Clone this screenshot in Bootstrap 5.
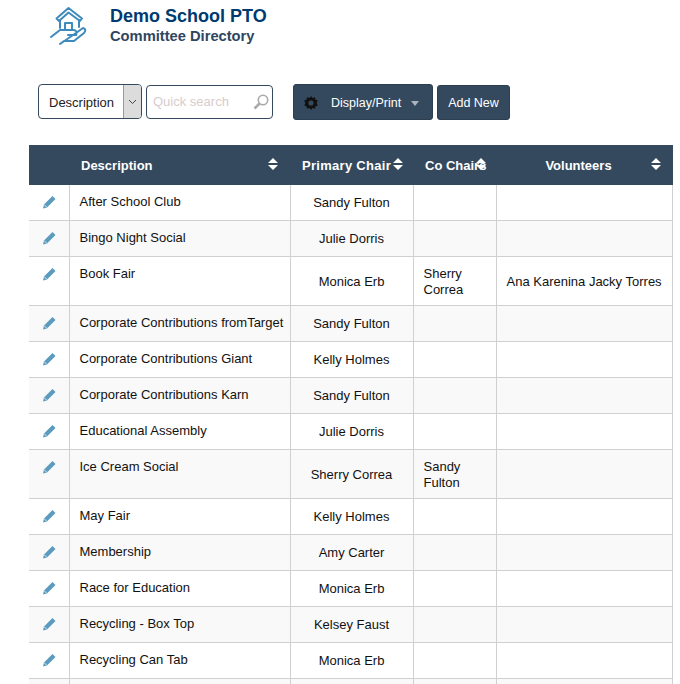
<!DOCTYPE html>
<html lang="en">
<head>
    <meta charset="UTF-8">
    <meta name="viewport" content="width=device-width, initial-scale=1.0">
    <title>Committee Directory</title>
    <link rel="stylesheet" href="https://cdn.jsdelivr.net/npm/bootstrap@5.3.0/dist/css/bootstrap.min.css">
    <style>
        html, body { height: 684px; overflow: hidden; }
        body { font-family: "Liberation Sans", Arial, sans-serif; font-size: 13px; color: #111; }
        .page-wrap { padding: 0 7px 0 29px; }
        .head-row { height: 84px; padding-left: 21px; }
        .logo-box { width: 38px; margin-right: 22px; margin-top: 6px; }
        .school-name { font-size: 18px; font-weight: 700; color: #003a70; line-height: 20px; margin: 6px 0 0; }
        .dir-name { font-size: 14.7px; font-weight: 700; color: #2f4560; line-height: 20px; }
        .tool-row { height: 61px; padding-left: 9px; padding-bottom: 25px; }
        .search-select { width: 104px; height: 35px; border: 1px solid #34495e; border-radius: 4px; overflow: hidden; }
        .search-select span { flex: 1; padding-left: 10px; line-height: 35px; color: #222; }
        .select-arrow { width: 18px; background: #dcdcdc; border-left: 1px solid #999; }
        .search-box { width: 127px; height: 34px; border: 1px solid #34495e; border-radius: 4px; margin: 1px 0 0 4px; padding: 0 3px 0 6px; color: #d8cccc; }
        .dark-btn { height: 36px; background: #34495e; color: #fff; border-radius: 3px; border: 1px solid #2c3e50; font-size: 12.5px; padding: 2px 0 0; }
        .print-btn { width: 140px; margin-left: 20px; margin-right: 4px; padding-left: 9px; }
        .add-btn { width: 73px; margin-top: 1px; height: 35px; }
        .caret-down { width: 0; height: 0; border: 4.5px solid transparent; border-top: 5px solid #aab4bf; border-bottom: 0; margin-left: 10px; }
        .dir-table { table-layout: fixed; width: 644px; margin: 0; border-color: #d0d0d0; }
        .dir-table thead th { background: #34495e; color: #fff; height: 40px; border: 0; padding: 1px 0 0; font-size: 13px; text-align: center; vertical-align: middle; position: relative; }
        .dir-table thead th.desc-head { text-align: left; padding-left: 12px; }
        .dir-table thead th.prim-head { padding-right: 10px; letter-spacing: .3px; }
        .dir-table thead th.vol-head { padding-right: 12px; }
        .dir-table td { height: 36px; padding: 9px 10px 7px; line-height: 16px; border: 1px solid #d0d0d0; color: #111; background: #fff; }
        .dir-table tbody tr:nth-child(even) td { background: #f9f9f9; }
        .dir-table tbody tr:first-child td { height: 35px; border-top: 0; }
        .dir-table td:last-child { border-right: 0; box-shadow: inset -1px 0 0 #d0d0d0; }
        .dir-table td.edit-cell { border-left: 0; padding: 9px 0 0 13px; }
        .dir-table td.desc-cell { padding-right: 0; white-space: nowrap; }
        .dir-table td.chair-cell { text-align: center; vertical-align: middle; }
        .dir-table td.vol-cell { vertical-align: middle; white-space: nowrap; }
        .dir-table tr.cut-row td { height: 6px; padding: 0; line-height: 0; border-bottom: 0; }
        .sort-mark { position: absolute; top: 13px; width: 10px; }
        .sort-mark svg { display: block; }
    </style>
</head>
<body>
<div class="page-wrap">

    <!-- Header -->
    <div class="head-row d-flex align-items-start">
        <div class="logo-box">
            <svg width="38" height="40" viewBox="0 0 38 40" fill="none" stroke="#3f8abd" stroke-width="2" stroke-linejoin="round" stroke-linecap="round">
                <path d="M6.5 12.5 L18.5 2 L32 12.5 L30 15 L18.5 6.5 L9 15 Z"/>
                <path d="M10 14 V22 M29 14 V21"/>
                <path d="M15 23 V17 H22 V23"/>
                <path d="M1 31 L10 24 H24 Q28 25 26 29 H18 M26 27 L33 22 Q37 23 34 27 L24 35 H14 L10 38 Z"/>
            </svg>
        </div>
        <div>
            <div class="school-name">Demo School PTO</div>
            <div class="dir-name">Committee Directory</div>
        </div>
    </div>

    <!-- Toolbar -->
    <div class="tool-row d-flex align-items-start">
        <div class="search-select d-flex">
            <span>Description</span>
            <div class="select-arrow d-flex align-items-center justify-content-center">
                <svg width="9" height="6" viewBox="0 0 9 6" fill="none" stroke="#444"><path d="M1 1 L4.5 4.5 L8 1"/></svg>
            </div>
        </div>
        <div class="search-box d-flex align-items-center justify-content-between">
            <span>Quick search</span>
            <svg width="16" height="17" viewBox="0 0 16 17" fill="none" stroke="#aaa" stroke-width="1.6"><circle cx="10" cy="6" r="4.7"/><path d="M6.5 9.5 L1.5 14.5" stroke-width="2.6"/></svg>
        </div>
        <button class="dark-btn print-btn d-flex align-items-center" type="button">
            <svg class="me-2" width="16" height="16" viewBox="0 0 16 16" fill="#111"><path d="M8 1 L9.5 3 L12 2.2 L12.4 4.6 L14.8 5.4 L13.6 8 L14.8 10.6 L12.4 11.4 L12 13.8 L9.5 13 L8 15 L6.5 13 L4 13.8 L3.6 11.4 L1.2 10.6 L2.4 8 L1.2 5.4 L3.6 4.6 L4 2.2 L6.5 3 Z"/><circle cx="8" cy="8" r="2.6" fill="#34495e"/></svg>
            <span class="ms-1">Display/Print</span>
            <span class="caret-down"></span>
        </button>
        <button class="dark-btn add-btn" type="button">Add New</button>
    </div>

    <!-- Committee table -->
    <table class="table dir-table">
        <colgroup>
            <col style="width:40px"><col style="width:221px"><col style="width:123px"><col style="width:83px"><col style="width:177px">
        </colgroup>
        <thead>
            <tr>
                <th></th>
                <th class="desc-head">Description<span class="sort-mark" style="left:199px"><svg width="10" height="12" viewBox="0 0 10 12" fill="#fff"><path d="M5 0 L10 5 H0 Z M0 7 H10 L5 12 Z"/></svg></span></th>
                <th class="prim-head">Primary Chair<span class="sort-mark" style="left:103px"><svg width="10" height="12" viewBox="0 0 10 12" fill="#fff"><path d="M5 0 L10 5 H0 Z M0 7 H10 L5 12 Z"/></svg></span></th>
                <th class="desc-head">Co Chairs<span class="sort-mark" style="left:63px"><svg width="10" height="12" viewBox="0 0 10 12" fill="#fff"><path d="M5 0 L10 5 H0 Z M0 7 H10 L5 12 Z"/></svg></span></th>
                <th class="vol-head">Volunteers<span class="sort-mark" style="left:155px"><svg width="10" height="12" viewBox="0 0 10 12" fill="#fff"><path d="M5 0 L10 5 H0 Z M0 7 H10 L5 12 Z"/></svg></span></th>
            </tr>
        </thead>
        <tbody id="rows"></tbody>
    </table>
</div>

<script>
    const committees = [
        ["After School Club", "Sandy Fulton", "", ""],
        ["Bingo Night Social", "Julie Dorris", "", ""],
        ["Book Fair", "Monica Erb", "Sherry Correa", "Ana Karenina Jacky Torres"],
        ["Corporate Contributions fromTarget", "Sandy Fulton", "", ""],
        ["Corporate Contributions Giant", "Kelly Holmes", "", ""],
        ["Corporate Contributions Karn", "Sandy Fulton", "", ""],
        ["Educational Assembly", "Julie Dorris", "", ""],
        ["Ice Cream Social", "Sherry Correa", "Sandy Fulton", ""],
        ["May Fair", "Kelly Holmes", "", ""],
        ["Membership", "Amy Carter", "", ""],
        ["Race for Education", "Monica Erb", "", ""],
        ["Recycling - Box Top", "Kelsey Faust", "", ""],
        ["Recycling Can Tab", "Monica Erb", "", ""]
    ];
    const pencil = `<svg width="15" height="15" viewBox="0 0 15 15"><path d="M10.5 1 L13.5 4 L5 12.5 L1 13.5 L2 9.5 Z" fill="#5b9bbd"/><path d="M2 9.5 L5 12.5" stroke="#d6e6ef" stroke-width="1"/></svg>`;
    // last row is cut off by the bottom of the window, only its borders show
    document.getElementById("rows").innerHTML = committees.map(c => `<tr>
        <td class="edit-cell">${pencil}</td>
        <td class="desc-cell">${c[0]}</td>
        <td class="chair-cell">${c[1]}</td>
        <td>${c[2]}</td>
        <td class="vol-cell">${c[3]}</td>
    </tr>`).join("") + `<tr class="cut-row"><td class="edit-cell"></td><td></td><td></td><td></td><td></td></tr>`;
</script>
<script src="https://cdn.jsdelivr.net/npm/bootstrap@5.3.0/dist/js/bootstrap.bundle.min.js"></script>
</body>
</html>
